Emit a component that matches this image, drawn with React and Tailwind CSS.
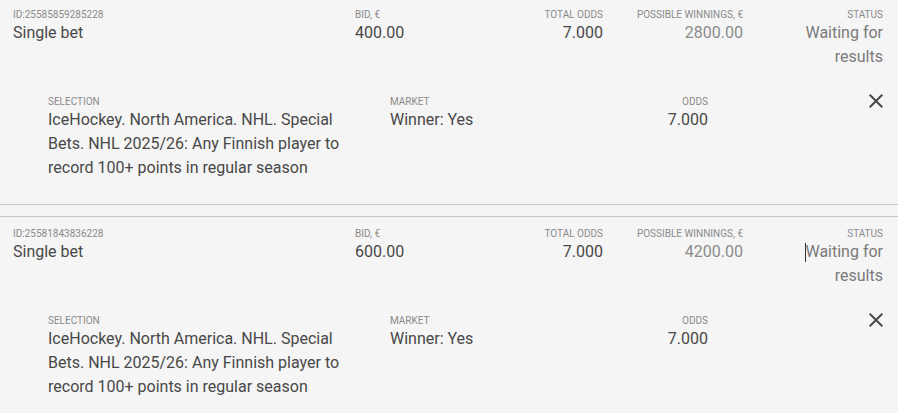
import React from 'react';

const bets = [
  { id: '25585859285228', bid: '400.00', odds: '7.000', winnings: '2800.00' },
  { id: '25581843836228', bid: '600.00', odds: '7.000', winnings: '4200.00', caret: true },
];

const Label = ({ children, className = '' }) => (
  <div className={`text-[10px] leading-[12px] uppercase text-[#8a8a8a] ${className}`}>{children}</div>
);

const CloseIcon = () => (
  <svg width="24" height="24" viewBox="0 0 24 24" className="text-[#484848]">
    <path d="M19 6.41 17.59 5 12 10.59 6.41 5 5 6.41 10.59 12 5 17.59 6.41 19 12 13.41 17.59 19 19 17.59 13.41 12z" fill="currentColor" />
  </svg>
);

const BetCard = ({ bet }) => (
  <div className="border-y border-[#c6c6c6] pt-[11px] pb-[24px]">
    {/* Header row */}
    <div className="flex pl-[13px] pr-[15px]">
      <div className="w-[342px]">
        <Label>ID:{bet.id}</Label>
        <div className="text-[16px] leading-[24px] text-[#484848]">Single bet</div>
      </div>
      <div className="w-[108px]">
        <Label>Bid, €</Label>
        <div className="text-[16px] leading-[24px] text-[#484848]">{bet.bid}</div>
      </div>
      <div className="w-[140px] text-right">
        <Label>Total odds</Label>
        <div className="text-[16px] leading-[24px] text-[#484848]">{bet.odds}</div>
      </div>
      <div className="w-[140px] text-right">
        <Label>Possible winnings, €</Label>
        <div className="text-[16px] leading-[24px] text-[#8c8c8c]">{bet.winnings}</div>
      </div>
      <div className="flex-1 text-right">
        <Label>Status</Label>
        <div className="text-[16px] leading-[24px] text-[#7a7a7a] pl-[50px]">
          <span className="relative">
            {bet.caret && <span className="absolute left-0 top-[1px] w-px h-[19px] bg-[#333]" />}
            Waiting for results
          </span>
        </div>
      </div>
    </div>

    {/* Selection details */}
    <div className="flex pl-[48px] pr-[10px] mt-[27px]">
      <div className="w-[342px] pr-[30px]">
        <Label>Selection</Label>
        <div className="text-[16px] leading-[24px] text-[#484848]">
          IceHockey. North America. NHL. Special Bets. NHL 2025/26: Any Finnish player to record 100+ points in regular season
        </div>
      </div>
      <div className="w-[178px]">
        <Label>Market</Label>
        <div className="text-[16px] leading-[24px] text-[#484848]">Winner: Yes</div>
      </div>
      <div className="w-[140px] text-right">
        <Label>Odds</Label>
        <div className="text-[16px] leading-[24px] text-[#484848]">{bet.odds}</div>
      </div>
      <div className="flex-1 flex justify-end -mt-[7px]">
        <div className="h-[24px]">
          <CloseIcon />
        </div>
      </div>
    </div>
  </div>
);

export default function App() {
  return (
    <div className="w-[898px] h-[413px] overflow-hidden bg-[#f5f5f5]" style={{ fontFamily: 'Roboto, "Liberation Sans", sans-serif' }}>
      <div className="-mt-[3px] flex flex-col gap-[11px]">
        {bets.map((bet) => (
          <BetCard key={bet.id} bet={bet} />
        ))}
      </div>
    </div>
  );
}
